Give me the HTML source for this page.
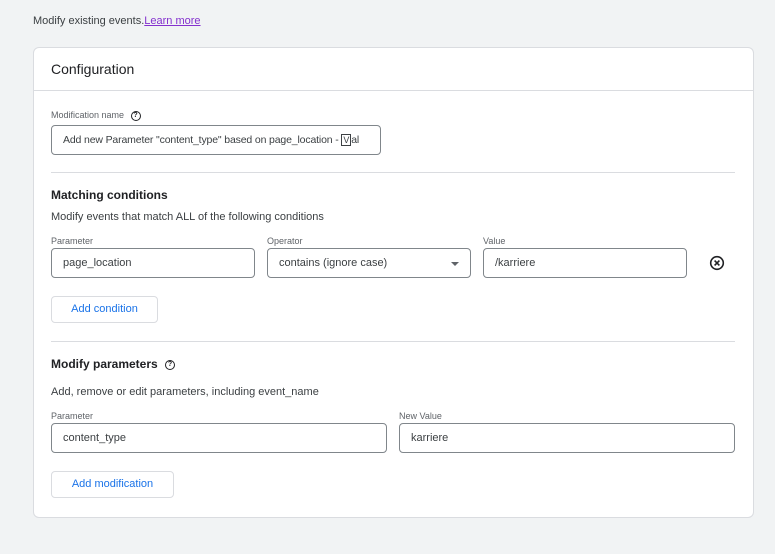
<!DOCTYPE html>
<html><head><meta charset="utf-8"><style>
*{margin:0;padding:0;box-sizing:border-box}
body{width:775px;height:554px;background:#f1f3f4;font-family:"Liberation Sans",Arial,sans-serif;color:#202124;position:relative;overflow:hidden}
.a{position:absolute}
.card{left:33px;top:47px;width:721px;height:471px;background:#fff;border:1px solid #dadce0;border-radius:6px}
.hr{height:1px;background:#dadce0}
.lbl{font-size:9px;color:#5f6368}
.in{border:1px solid #80868b;border-radius:4px;height:30px;font-size:11px;padding-left:11px;line-height:28px;color:#3c4043;background:#fff;white-space:nowrap;overflow:hidden}
.btn{border:1px solid #dadce0;border-radius:4px;height:27px;font-size:11px;color:#1a73e8;text-align:center;line-height:25px;background:#fff}
.h{font-size:12px;color:#202124}
.t{font-size:11px;color:#3c4043}
.q{display:inline-block;width:10px;height:10px;border:1.4px solid #202124;border-radius:50%;font-size:7px;font-weight:bold;text-align:center;line-height:8px;vertical-align:middle;margin-left:4px;color:#202124}
</style></head><body>
<div class="a t" style="left:33px;top:15px">Modify existing events.<span style="color:#8430ce;text-decoration:underline">Learn more</span></div>
<div class="a card"></div>
<div class="a" style="left:51px;top:61px;font-size:14px;color:#202124">Configuration</div>
<div class="a hr" style="left:34px;top:90px;width:719px"></div>
<div class="a lbl" style="left:51px;top:110px">Modification name <span class="q">?</span></div>
<div class="a in" style="left:51px;top:125px;width:330px;font-size:10.5px;letter-spacing:-0.15px">Add new Parameter "content_type" based on page_location - <span style="border:1px solid #3c4043;font-size:9px;padding:0 1px">V</span>al</div>
<div class="a hr" style="left:51px;top:172px;width:684px"></div>
<div class="a h" style="left:51px;top:188px;font-weight:600">Matching conditions</div>
<div class="a t" style="left:51px;top:211px">Modify events that match ALL of the following conditions</div>
<div class="a lbl" style="left:51px;top:236px">Parameter</div>
<div class="a lbl" style="left:267px;top:236px">Operator</div>
<div class="a lbl" style="left:483px;top:236px">Value</div>
<div class="a in" style="left:51px;top:248px;width:204px">page_location</div>
<div class="a in" style="left:267px;top:248px;width:204px">contains (ignore case)</div>
<div class="a" style="left:451px;top:262px;width:0;height:0;border-left:4px solid transparent;border-right:4px solid transparent;border-top:4px solid #5f6368"></div>
<div class="a in" style="left:483px;top:248px;width:204px">/karriere</div>
<svg class="a" style="left:709px;top:255px" width="16" height="16" viewBox="0 0 16 16"><circle cx="8" cy="8" r="6.3" fill="none" stroke="#202124" stroke-width="1.6"/><path d="M5.6 5.6L10.4 10.4M10.4 5.6L5.6 10.4" stroke="#202124" stroke-width="1.6"/></svg>
<div class="a btn" style="left:51px;top:296px;width:107px">Add condition</div>
<div class="a hr" style="left:51px;top:341px;width:684px"></div>
<div class="a h" style="left:51px;top:357px;font-weight:600">Modify parameters <span class="q">?</span></div>
<div class="a t" style="left:51px;top:386px">Add, remove or edit parameters, including event_name</div>
<div class="a lbl" style="left:51px;top:411px">Parameter</div>
<div class="a lbl" style="left:399px;top:411px">New Value</div>
<div class="a in" style="left:51px;top:423px;width:336px">content_type</div>
<div class="a in" style="left:399px;top:423px;width:336px">karriere</div>
<div class="a btn" style="left:51px;top:471px;width:123px">Add modification</div>
</body></html>
